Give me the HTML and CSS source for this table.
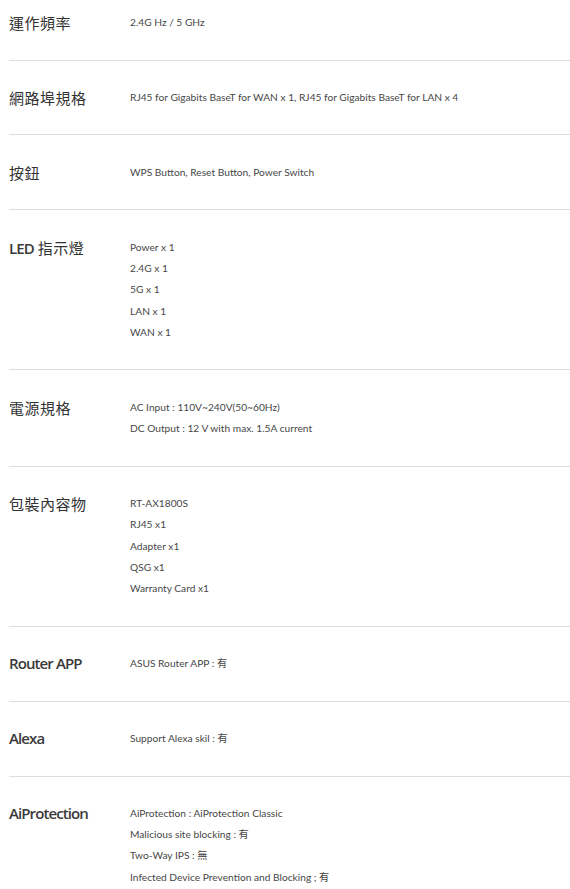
FILE: index.html
```html
<!DOCTYPE html>
<html lang="zh-Hant">
<head>
<meta charset="utf-8">
<title>規格</title>
<link rel="stylesheet" href="styles.css">
</head>
<body>
<div class="specs">
  <div class="row first">
    <div class="label">運作頻率</div>
    <ul class="values"><li>2.4G Hz / 5 GHz</li></ul>
  </div>
  <div class="row">
    <div class="label">網路埠規格</div>
    <ul class="values"><li>RJ45 for Gigabits BaseT for WAN x 1, RJ45 for Gigabits BaseT for LAN x 4</li></ul>
  </div>
  <div class="row">
    <div class="label">按鈕</div>
    <ul class="values"><li>WPS Button, Reset Button, Power Switch</li></ul>
  </div>
  <div class="row">
    <div class="label"><span class="latin">LED</span> 指示燈</div>
    <ul class="values">
      <li>Power x 1</li>
      <li>2.4G x 1</li>
      <li>5G x 1</li>
      <li>LAN x 1</li>
      <li>WAN x 1</li>
    </ul>
  </div>
  <div class="row">
    <div class="label">電源規格</div>
    <ul class="values">
      <li>AC Input : 110V~240V(50~60Hz)</li>
      <li>DC Output : 12 V with max. 1.5A current</li>
    </ul>
  </div>
  <div class="row">
    <div class="label">包裝內容物</div>
    <ul class="values">
      <li>RT-AX1800S</li>
      <li>RJ45 x1</li>
      <li>Adapter x1</li>
      <li>QSG x1</li>
      <li>Warranty Card x1</li>
    </ul>
  </div>
  <div class="row">
    <div class="label en">Router APP</div>
    <ul class="values"><li>ASUS Router APP : 有</li></ul>
  </div>
  <div class="row">
    <div class="label en">Alexa</div>
    <ul class="values"><li>Support Alexa skil : 有</li></ul>
  </div>
  <div class="row last">
    <div class="label en">AiProtection</div>
    <ul class="values">
      <li>AiProtection : AiProtection Classic</li>
      <li>Malicious site blocking : 有</li>
      <li>Two-Way IPS : 無</li>
      <li>Infected Device Prevention and Blocking ; 有</li>
    </ul>
  </div>
</div>
</body>
</html>
```
FILE: styles.css
```css
html, body {
  margin: 0;
  padding: 0;
  background: #ffffff;
}

body {
  font-family: "Open Sans", "Noto Sans CJK TC", sans-serif;
  color: #333333;
}

.specs {
  margin-left: 9px;
}

.row {
  display: flex;
  align-items: flex-start;
  padding: 26.3px 0;
  border-bottom: 1px solid #dedede;
}

.row.first {
  padding-top: 12px;
}

.row.last {
  border-bottom: none;
}

.label {
  flex: 0 0 121px;
  font-family: "Noto Sans CJK TC", "Noto Sans", sans-serif;
  font-size: 15px;
  line-height: 21.3px;
  color: #333333;
  letter-spacing: 0.5px;
}

.label.en,
.latin {
  font-family: "Open Sans", "Noto Sans CJK TC", sans-serif;
  font-weight: 600;
  letter-spacing: -0.9px;
  color: #3a3a3a;
}

.values {
  list-style: none;
  margin: 0;
  padding: 0;
  font-family: "Lato", "Noto Sans CJK TC", sans-serif;
  font-size: 10.2px;
  line-height: 21.3px;
  color: #474747;
}
```
